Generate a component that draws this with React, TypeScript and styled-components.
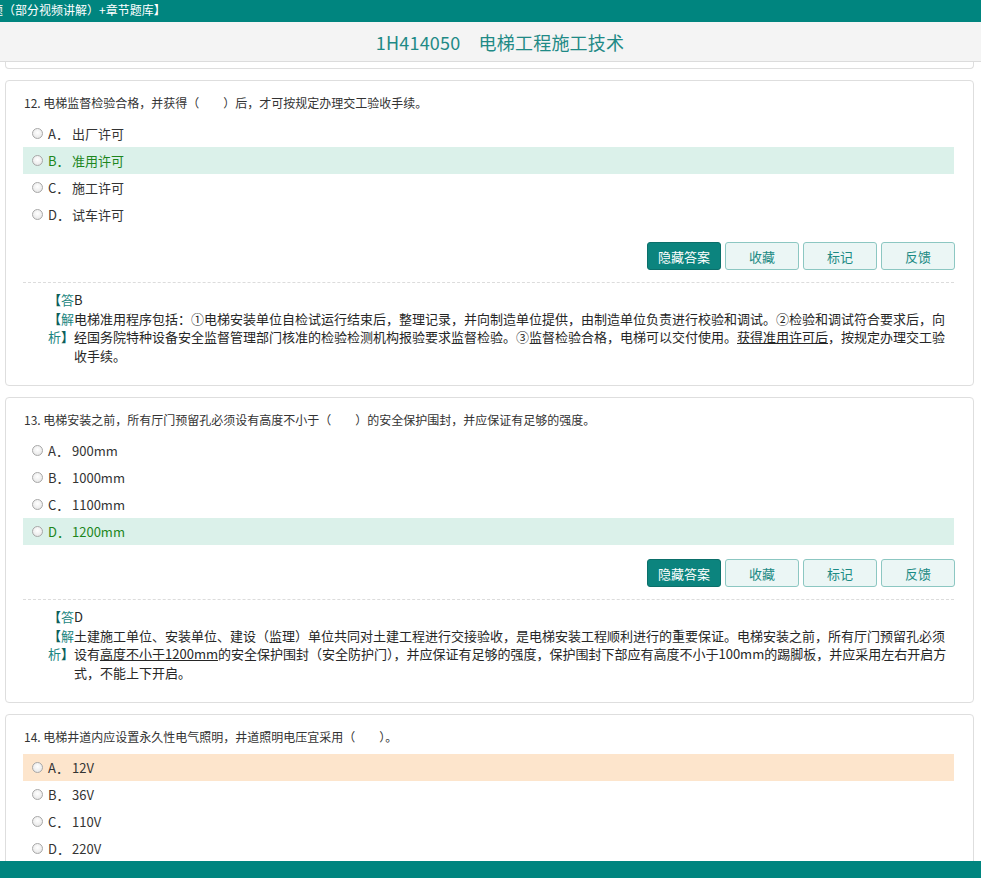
import React, { useState } from 'react';
import styled, { createGlobalStyle } from 'styled-components';

const GlobalStyle = createGlobalStyle`
    html, body {
        margin: 0;
        padding: 0;
        overflow: hidden;
        background: #fff;
    }
    body {
        font-family: "Noto Sans CJK SC", "Microsoft YaHei", sans-serif;
        font-size: 12px;
        color: #333;
    }
`;

const TopBar = styled.div`
    height: 22px;
    background: #00857f;
    color: #fff;
    font-size: 12px;
    line-height: 20px;
    white-space: nowrap;
    overflow: hidden;
`;

const TopBarText = styled.span`
    display: inline-block;
    margin-left: -9px;
`;

const SubHeader = styled.div`
    height: 39px;
    background: #f4f4f4;
    border-bottom: 1px solid #dcdcdc;
    display: flex;
    align-items: center;
    justify-content: center;
    padding-left: 19px;
    font-size: 18px;
    letter-spacing: 0.2px;
    color: #1f8a86;
`;

const Main = styled.div`
    padding: 0 7px 0 5px;
`;

// bottom edge of the question scrolled above
const CardTail = styled.div`
    height: 6px;
    border: 1px solid #dedede;
    border-top: none;
    border-radius: 0 0 4px 4px;
    margin-bottom: 11px;
`;

const Card = styled.div`
    border: 1px solid #dedede;
    border-radius: 4px;
    padding: 12px 19px 20px 17px;
    margin-bottom: 11px;
    background: #fff;
`;

const Stem = styled.div`
    padding-left: 1px;
    line-height: 20px;
    font-size: 12px;
    color: #333;
`;

const OptionList = styled.div`
    margin-top: 7px;
`;

type Tone = 'correct' | 'picked';

const OptionRow = styled.div<{ $tone?: Tone }>`
    display: flex;
    align-items: center;
    height: 27px;
    padding-left: 9px;
    font-size: 13px;
    color: ${p => (p.$tone === 'correct' ? '#1d861d' : '#333')};
    background: ${p =>
        p.$tone === 'correct' ? '#dbf1ea' : p.$tone === 'picked' ? '#fde5cc' : 'transparent'};
`;

const Radio = styled.span`
    width: 11px;
    height: 11px;
    box-sizing: border-box;
    border-radius: 50%;
    border: 1px solid #a8a8a8;
    background: radial-gradient(circle at 50% 40%, #fff 0%, #ececec 65%, #d4d4d4 100%);
    margin-right: 5px;
`;

const Letter = styled.span`
    width: 24px;
`;

const Toolbar = styled.div`
    display: flex;
    justify-content: flex-end;
    gap: 4px;
    margin-top: 14px;
    margin-right: -1px;
`;

const ActionButton = styled.button<{ $primary?: boolean }>`
    width: 74px;
    height: 28px;
    box-sizing: border-box;
    border-radius: 3px;
    padding: 0;
    font-family: inherit;
    font-size: 13px;
    cursor: pointer;
    border: 1px solid ${p => (p.$primary ? '#0b6f6a' : '#8cc7c2')};
    background: ${p => (p.$primary ? '#0c847e' : '#ebf6f5')};
    color: ${p => (p.$primary ? '#fff' : '#1b8a84')};
`;

const Divider = styled.div`
    margin-top: 12px;
    border-top: 1px dashed #dcdcdc;
`;

const AnswerBox = styled.div`
    padding: 8px 4px 0 25px;
    font-size: 13px;
    line-height: 18.5px;
    color: #262626;
`;

const AnswerLine = styled.div`
    display: flex;
`;

const Label = styled.div`
    flex: 0 0 26px;
    width: 26px;
    color: #1a8580;
`;

const Bracket = styled.b`
    color: #0e5f5b;
`;

const AnswerText = styled.div`
    flex: 1;
    min-width: 0;
`;

const Marked = styled.span`
    text-decoration: underline;
`;

const Footer = styled.div`
    position: fixed;
    left: 0;
    right: 0;
    bottom: 0;
    height: 17px;
    background: #00857f;
`;

interface Question {
    no: number;
    stem: string;
    options: string[];
    answer?: string;
    tone?: { index: number; kind: Tone };
    analysis?: React.ReactNode;
}

const LETTERS = ['A', 'B', 'C', 'D'];

const questions: Question[] = [
    {
        no: 12,
        stem: '电梯监督检验合格，并获得（　　）后，才可按规定办理交工验收手续。',
        options: ['出厂许可', '准用许可', '施工许可', '试车许可'],
        answer: 'B',
        tone: { index: 1, kind: 'correct' },
        analysis: (
            <>
                电梯准用程序包括：①电梯安装单位自检试运行结束后，整理记录，并向制造单位提供，由制造单位负责进行校验和调试。②检验和调试符合要求后，向经国务院特种设备安全监督管理部门核准的检验检测机构报验要求监督检验。③监督检验合格，电梯可以交付使用。
                <Marked>获得准用许可后</Marked>，按规定办理交工验收手续。
            </>
        ),
    },
    {
        no: 13,
        stem: '电梯安装之前，所有厅门预留孔必须设有高度不小于（　　）的安全保护围封，并应保证有足够的强度。',
        options: ['900mm', '1000mm', '1100mm', '1200mm'],
        answer: 'D',
        tone: { index: 3, kind: 'correct' },
        analysis: (
            <>
                土建施工单位、安装单位、建设（监理）单位共同对土建工程进行交接验收，是电梯安装工程顺利进行的重要保证。电梯安装之前，所有厅门预留孔必须设有
                <Marked>高度不小于1200mm</Marked>
                的安全保护围封（安全防护门），并应保证有足够的强度，保护围封下部应有高度不小于100mm的踢脚板，并应采用左右开启方式，不能上下开启。
            </>
        ),
    },
    {
        no: 14,
        stem: '电梯井道内应设置永久性电气照明，井道照明电压宜采用（　　）。',
        options: ['12V', '36V', '110V', '220V'],
        tone: { index: 0, kind: 'picked' },
    },
];

const QuestionCard: React.FC<{ q: Question }> = ({ q }) => {
    const [shown, setShown] = useState<boolean>(!!q.answer);

    return (
        <Card>
            <Stem>
                {q.no}. {q.stem}
            </Stem>
            <OptionList>
                {q.options.map((text, i) => (
                    <OptionRow key={i} $tone={q.tone && q.tone.index === i ? q.tone.kind : undefined}>
                        <Radio />
                        <Letter>{LETTERS[i]}．</Letter>
                        {text}
                    </OptionRow>
                ))}
            </OptionList>
            <Toolbar>
                <ActionButton $primary onClick={() => setShown(s => !s)}>
                    {shown ? '隐藏答案' : '显示答案'}
                </ActionButton>
                <ActionButton>收藏</ActionButton>
                <ActionButton>标记</ActionButton>
                <ActionButton>反馈</ActionButton>
            </Toolbar>
            {shown && q.answer && (
                <>
                    <Divider />
                    <AnswerBox>
                        <AnswerLine>
                            <Label>
                                <Bracket>【</Bracket>答
                            </Label>
                            <AnswerText>{q.answer}</AnswerText>
                        </AnswerLine>
                        <AnswerLine>
                            <Label>
                                <Bracket>【</Bracket>解析<Bracket>】</Bracket>
                            </Label>
                            <AnswerText>{q.analysis}</AnswerText>
                        </AnswerLine>
                    </AnswerBox>
                </>
            )}
        </Card>
    );
};

const App: React.FC = () => {
    return (
        <>
            <GlobalStyle />
            <TopBar>
                <TopBarText>题（部分视频讲解）+章节题库】</TopBarText>
            </TopBar>
            <SubHeader>1H414050　电梯工程施工技术</SubHeader>
            <Main>
                <CardTail />
                {questions.map(q => (
                    <QuestionCard key={q.no} q={q} />
                ))}
            </Main>
            <Footer />
        </>
    );
};

export default App;
